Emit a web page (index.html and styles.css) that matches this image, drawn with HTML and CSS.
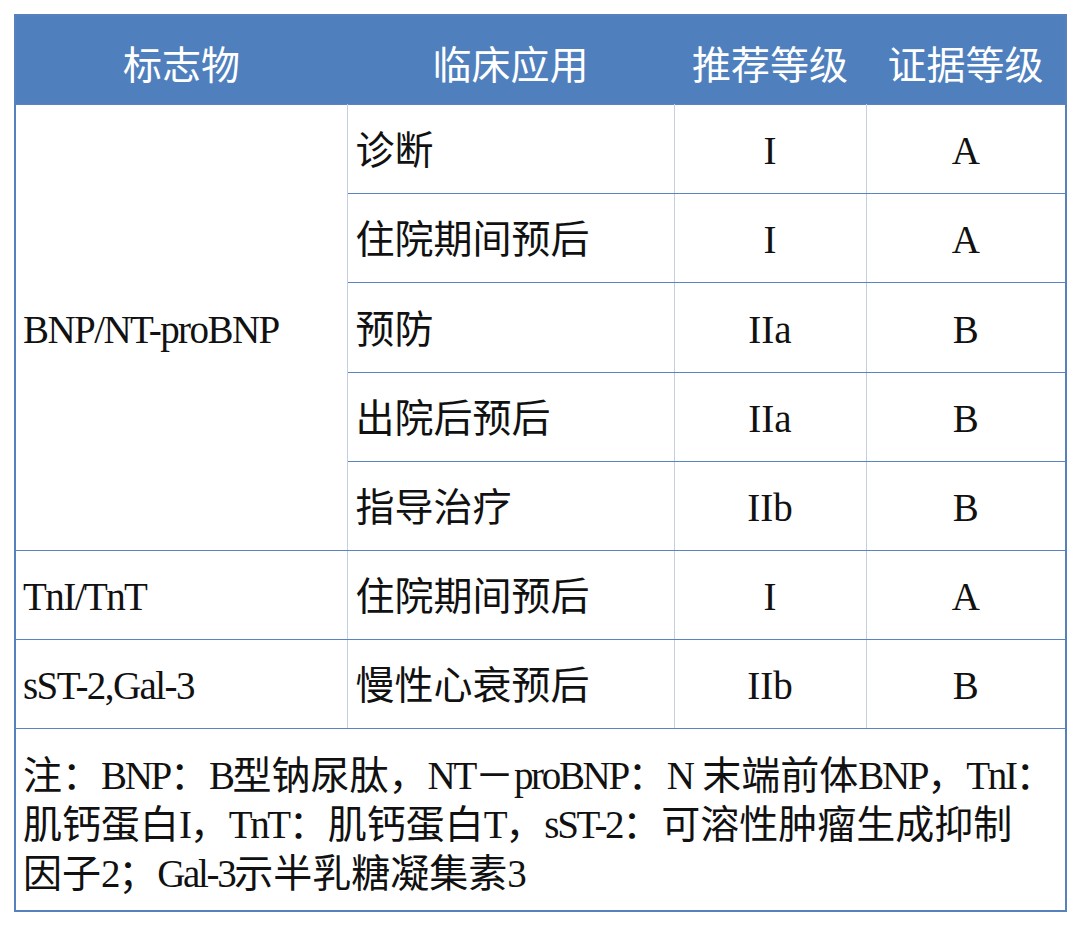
FILE: index.html
```html
<!DOCTYPE html>
<html lang="zh-CN">
<head>
<meta charset="utf-8">
<title>心衰标志物</title>
<link rel="stylesheet" href="styles.css">
</head>
<body>
<table class="grid">
  <colgroup>
    <col class="c1"><col class="c2"><col class="c3"><col class="c4">
  </colgroup>
  <thead>
    <tr class="head">
      <th>标志物</th><th>临床应用</th><th>推荐等级</th><th>证据等级</th>
    </tr>
  </thead>
  <tbody>
    <tr class="row">
      <td class="marker" rowspan="5"><span class="lat">BNP/NT-proBNP</span></td>
      <td class="use">诊断</td><td class="grade">I</td><td class="grade">A</td>
    </tr>
    <tr class="row">
      <td class="use">住院期间预后</td><td class="grade">I</td><td class="grade">A</td>
    </tr>
    <tr class="row">
      <td class="use">预防</td><td class="grade">IIa</td><td class="grade">B</td>
    </tr>
    <tr class="row">
      <td class="use">出院后预后</td><td class="grade">IIa</td><td class="grade">B</td>
    </tr>
    <tr class="row">
      <td class="use">指导治疗</td><td class="grade">IIb</td><td class="grade">B</td>
    </tr>
    <tr class="row">
      <td class="marker"><span class="lat">TnI/TnT</span></td>
      <td class="use">住院期间预后</td><td class="grade">I</td><td class="grade">A</td>
    </tr>
    <tr class="row">
      <td class="marker"><span class="lat">sST-2,Gal-3</span></td>
      <td class="use">慢性心衰预后</td><td class="grade">IIb</td><td class="grade">B</td>
    </tr>
    <tr class="note-row">
      <td class="note" colspan="4">
        <div class="note-line">注：<span class="lat">BNP</span>：<span class="lat">B</span>型钠尿肽，<span class="lat">NT</span>－<span class="lat">proBNP</span>：<span class="lat">N</span>&nbsp;末端前体<span class="lat">BNP</span>，<span class="lat">TnI</span>：</div>
        <div class="note-line">肌钙蛋白<span class="lat">I</span>，<span class="lat">TnT</span>：肌钙蛋白<span class="lat">T</span>，<span class="lat">sST-2</span>：可溶性肿瘤生成抑制</div>
        <div class="note-line">因子<span class="lat">2</span>；<span class="lat">Gal-3</span>示半乳糖凝集素<span class="lat">3</span></div>
      </td>
    </tr>
  </tbody>
</table>
</body>
</html>
```

FILE: styles.css
```css
html, body {
  margin: 0;
  padding: 0;
  background: #ffffff;
}

body {
  padding: 14px 0 0 14px;
  font-family: "Liberation Serif", "Noto Sans CJK SC", serif;
  color: #111111;
}

.grid {
  border-collapse: collapse;
  table-layout: fixed;
  width: 1051px;
  border: 2px solid #5581bd;
  font-size: 39px;
}

.c1 { width: 332px; }
.c2 { width: 327px; }
.c3 { width: 192px; }
.c4 { width: 200px; }

.head th {
  height: 84px;
  padding: 4px 0 0 0;
  background: #4f80bd;
  color: #ffffff;
  font-family: "Noto Sans CJK SC", sans-serif;
  font-weight: 400;
  font-size: 39px;
  line-height: 1.2;
  text-align: center;
  vertical-align: middle;
  border: none;
  letter-spacing: 0;
}

.row td {
  height: 83.2px;
  padding: 5px 8px 0 8px;
  line-height: 1.2;
  vertical-align: middle;
  border-top: 1.5px solid #5a84bf;
  border-bottom: 1.5px solid #5a84bf;
  border-left: 1px solid #c3cfe3;
  border-right: 1px solid #c3cfe3;
  white-space: nowrap;
}

.row td.marker {
  border-left: 2px solid #5581bd;
  padding-left: 7px;
}

.row td.grade {
  text-align: center;
}

.lat {
  letter-spacing: -0.04em;
}

.note-row td {
  height: 159px;
  padding: 22px 8px 0 7px;
  vertical-align: top;
  border-top: 1.5px solid #5a84bf;
  border-bottom: 2px solid #5581bd;
}

.note-line {
  line-height: 49px;
  white-space: nowrap;
}

.note .lat {
  letter-spacing: -0.06em;
}
```
